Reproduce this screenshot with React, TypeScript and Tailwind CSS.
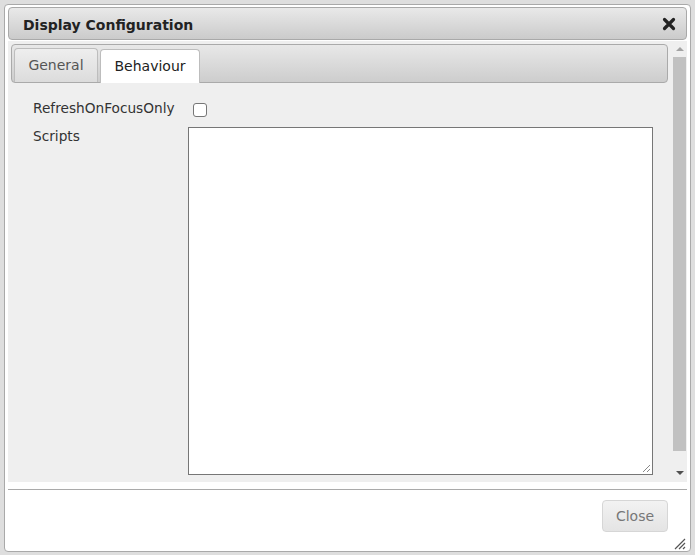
export default function App() {
  return (
    <div className="w-[695px] h-[555px] bg-[#dedede] pt-[4px] pl-[4px]" style={{ fontFamily: 'Tahoma, "DejaVu Sans", sans-serif' }}>
      <div className="w-[687px] h-[548px] bg-white border border-[#a9a9a9] rounded-[4px] pt-[2px] px-[3px] flex flex-col">
        {/* Title bar */}
        <div className="h-[33px] flex items-center justify-between pl-[14px] pr-[10px] border border-[#a9a9a9] rounded-[4px] bg-gradient-to-b from-[#e9e9e9] to-[#cbcbcb]">
          <span className="text-[14px] font-bold text-[#222] pt-[3px]" style={{ fontFamily: '"DejaVu Sans", sans-serif' }}>
            Display Configuration
          </span>
          <svg width="14" height="14" viewBox="0 0 14 14" className="mt-[1px]">
            <path d="M2.5 2.5 L11.5 11.5 M11.5 2.5 L2.5 11.5" stroke="#222" strokeWidth="3.2" strokeLinecap="round" />
          </svg>
        </div>

        {/* Content panel */}
        <div className="mt-[1px] h-[441px] bg-[#efefef] flex">
          <div className="flex-1 pt-[3px] pl-[3px] pr-[4px] flex flex-col">
            {/* Tabs header */}
            <div className="h-[39px] border border-[#aaaaaa] rounded-[4px] bg-gradient-to-b from-[#e8e8e8] to-[#cdcdcd] flex items-end pl-[2px] gap-[2px]">
              <div className="w-[84px] h-[34px] border border-b-0 border-[#bdbdbd] rounded-t-[4px] bg-gradient-to-b from-[#eeeeee] to-[#dcdcdc] flex items-center justify-center text-[14px] text-[#555]">
                General
              </div>
              <div className="w-[100px] h-[34px] border border-b-0 border-[#bdbdbd] rounded-t-[4px] bg-white flex items-center justify-center text-[14px] text-[#222] -mb-px">
                Behaviour
              </div>
            </div>

            {/* Form */}
            <div className="flex pl-[22px] pt-[13px]">
              <div className="w-[155px] flex flex-col text-[13.7px] text-[#333]">
                <div className="h-[24px] flex items-center">RefreshOnFocusOnly</div>
                <div className="h-[24px] flex items-center mt-[4px]">Scripts</div>
              </div>
              <div className="flex flex-col">
                <div className="h-[24px] flex items-center pl-[5px] pt-[4px]">
                  <div className="w-[14px] h-[14px] border border-[#767676] rounded-[3px] bg-white" />
                </div>
                <div className="relative mt-[7px] w-[465px] h-[348px] border border-[#767676] bg-white">
                  <svg width="10" height="10" viewBox="0 0 10 10" className="absolute right-[1px] bottom-[1px]">
                    <path d="M9 2 L2 9 M9 6 L6 9" stroke="#888" strokeWidth="1" />
                  </svg>
                </div>
              </div>
            </div>
          </div>

          {/* Scrollbar */}
          <div className="w-[15px] flex flex-col items-center pt-[2px] pb-[3px] bg-[#efefef]">
            <div className="h-[12px] flex items-center justify-center">
              <div className="w-0 h-0 border-l-[4px] border-r-[4px] border-b-[4px] border-l-transparent border-r-transparent border-b-[#a3a3a3]" />
            </div>
            <div className="flex-1 w-[13px] bg-[#c1c1c1] my-[2px] mb-[16px]" />
            <div className="h-[12px] flex items-center justify-center">
              <div className="w-0 h-0 border-l-[4px] border-r-[4px] border-t-[4px] border-l-transparent border-r-transparent border-t-[#505050]" />
            </div>
          </div>
        </div>

        {/* Footer */}
        <div className="mt-[7px] border-t border-[#aaaaaa] flex-1 relative flex justify-end items-start pt-[10px] pr-[19px]">
          <button className="w-[66px] h-[32px] rounded-[4px] border border-[#d6d6d6] bg-gradient-to-b from-[#f2f2f2] to-[#e4e4e4] text-[14px] text-[#777]">
            Close
          </button>
          <svg width="14" height="14" viewBox="0 0 14 14" className="absolute right-[1px] bottom-[1px]">
            <path d="M13 3 L3 13 M13 7 L7 13 M13 11 L11 13" stroke="#555" strokeWidth="1.2" />
          </svg>
        </div>
      </div>
    </div>
  )
}
